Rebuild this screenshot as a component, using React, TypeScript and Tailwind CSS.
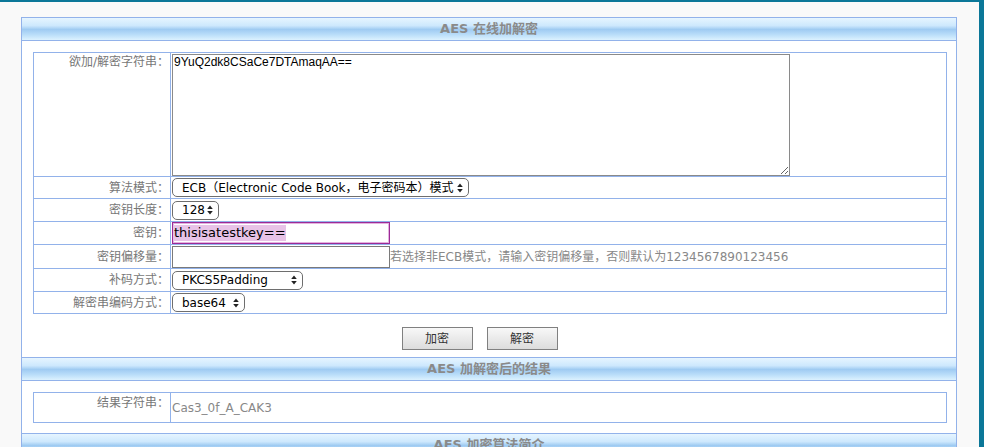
import React from "react";

const headerBg =
  "bg-[linear-gradient(to_bottom,#e6f5ff_0%,#cde8fd_35%,#9fcbf2_52%,#b9ddf9_75%,#dcf2ff_100%)]";

const Header = ({ title }: { title: string }) => (
  <div
    className={`flex h-[24px] items-center justify-center border-y border-[#92b2ea] ${headerBg} text-[13px] font-bold text-[#8a8a8a]`}
  >
    {title}
  </div>
);

const Arrows = () => (
  <svg width="6" height="10" viewBox="0 0 6 10" className="absolute right-[5px] top-1/2 -translate-y-1/2">
    <path d="M3 0.5L5.8 4H0.2z M0.2 6H5.8L3 9.5z" fill="#222" />
  </svg>
);

const Select = ({ text, className }: { text: string; className: string }) => (
  <div
    className={`relative flex h-[19px] items-center rounded-[5px] border border-[#6e6e6e] bg-white pl-[9px] text-[12px] whitespace-nowrap text-black ${className}`}
  >
    {text}
    <Arrows />
  </div>
);

const Row = ({
  label,
  h,
  top,
  children,
  last,
}: {
  label: string;
  h: string;
  top?: boolean;
  children: React.ReactNode;
  last?: boolean;
}) => (
  <div className={`flex ${h} ${last ? "" : "border-b border-[#92b2ea]"}`}>
    <div
      className={`flex w-[137px] shrink-0 justify-end border-r border-[#92b2ea] pr-[1px] text-[12px] leading-[16px] text-[#777] ${
        top ? "items-start pt-[1px]" : "items-center"
      }`}
    >
      {label}
    </div>
    <div className="flex flex-1 items-center pl-[1px]">{children}</div>
  </div>
);

export default function App() {
  return (
    <div className="h-[447px] w-[984px] overflow-hidden bg-[#0b7798] pt-[2px] pr-[5px] font-['DejaVu_Sans','Noto_Sans_CJK_SC',sans-serif]">
      <div className="h-full bg-[#f9f9f9] pt-[15px] pl-[21px] pr-[22px]">
        <div className="border-x border-[#92b2ea] bg-white">
          <Header title="AES 在线加解密" />
          <div className="pt-[11px] pb-[7px]">
            <div className="ml-[11px] w-[914px] border border-[#92b2ea]">
              <Row label="欲加/解密字符串：" h="h-[124px]" top>
                <textarea
                  readOnly
                  defaultValue="9YuQ2dk8CSaCe7DTAmaqAA=="
                  className="mt-[1px] h-[122px] w-[618px] self-start border border-[#8a8a8a] px-[1px] pt-0 font-['Liberation_Sans',sans-serif] text-[12px] leading-[15px] text-black outline-none"
                />
              </Row>
              <Row label="算法模式：" h="h-[22px]">
                <Select text="ECB（Electronic Code Book，电子密码本）模式" className="w-[297px]" />
              </Row>
              <Row label="密钥长度：" h="h-[23px]">
                <Select text="128" className="w-[47px]" />
              </Row>
              <Row label="密钥：" h="h-[23px]">
                <div className="flex h-[22px] w-[218px] items-center border border-[#9c2a96] shadow-[inset_0_0_0_1px_#e2b2df]">
                  <span className="bg-[#e8c3e7] pl-[1px] text-[13px] leading-[16px] text-black">thisisatestkey==</span>
                </div>
              </Row>
              <Row label="密钥偏移量：" h="h-[24px]">
                <div className="h-[22px] w-[218px] border border-[#7a7a7a]" />
                <span className="text-[12px] text-[#888]">
                  若选择非ECB模式，请输入密钥偏移量，否则默认为1234567890123456
                </span>
              </Row>
              <Row label="补码方式：" h="h-[23px]">
                <Select text="PKCS5Padding" className="w-[131px]" />
              </Row>
              <Row label="解密串编码方式：" h="h-[21px]" last>
                <Select text="base64" className="w-[73px]" />
              </Row>
            </div>
            <div className="mt-[13px] flex justify-center gap-[14px] pr-[19px]">
              <button className="h-[23px] w-[71px] border border-[#808080] bg-[linear-gradient(to_bottom,#f8f8f8,#dcdcdc)] text-[12px] text-[#333]">
                加密
              </button>
              <button className="h-[23px] w-[71px] border border-[#808080] bg-[linear-gradient(to_bottom,#f8f8f8,#dcdcdc)] text-[12px] text-[#333]">
                解密
              </button>
            </div>
          </div>
          <Header title="AES 加解密后的结果" />
          <div className="pt-[11px] pb-[10px]">
            <div className="ml-[11px] w-[914px] border border-[#92b2ea]">
              <div className="flex h-[29px]">
                <div className="w-[137px] shrink-0 border-r border-[#92b2ea] pt-[2px] pr-[1px] text-right text-[12px] leading-[16px] text-[#777]">
                  结果字符串：
                </div>
                <div className="flex flex-1 items-center pl-[1px] text-[12px] text-[#888]">Cas3_0f_A_CAK3</div>
              </div>
            </div>
          </div>
          <Header title="AES 加密算法简介" />
        </div>
      </div>
    </div>
  );
}
